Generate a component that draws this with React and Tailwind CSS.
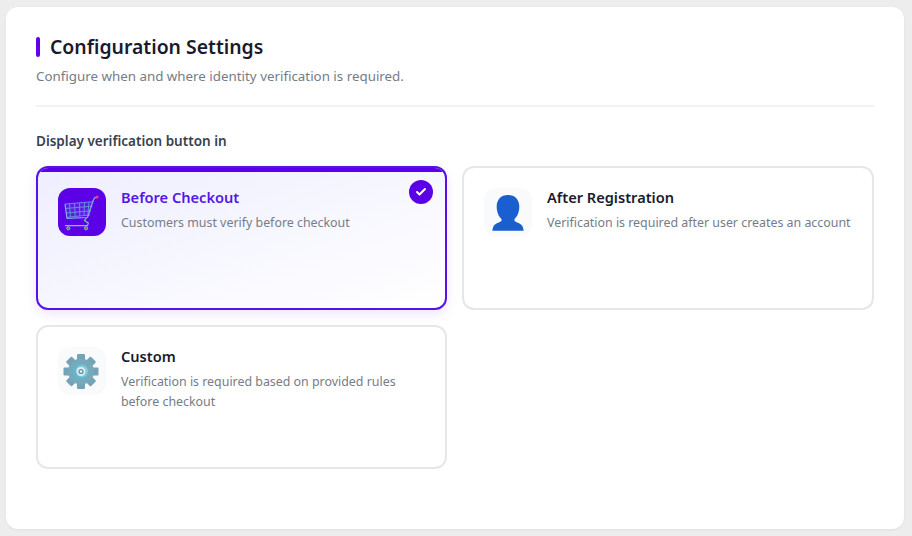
import React from 'react';
import { Check } from 'lucide-react';

const OPTIONS = [
  { key: 'checkout', title: 'Before Checkout', text: 'Customers must verify before checkout', icon: 'cart', selected: true },
  { key: 'registration', title: 'After Registration', text: 'Verification is required after user creates an account', icon: 'user' },
  { key: 'custom', title: 'Custom', text: 'Verification is required based on provided rules before checkout', icon: 'gear' },
];

function CartIcon() {
  return (
    <svg viewBox="0 0 48 48" fill="none" className="h-12 w-12">
      <path d="M7 16 35.300 13.700 32 27 9 29.500Z" fill="#5a6fe0" fillOpacity="0.25" />
      <path d="M7 16 35.300 13.700M7.400 20.500 34.300 18.200M8 25 33 22.800M8.700 29.300 32 27M11.500 15.600l1 13.500M16.500 15.200l.7 13.500M21.500 14.800l.3 13.400M26.500 14.400l-.5 13.400M31 14 29.800 27.300" stroke="#6c93e0" strokeWidth="0.900" />
      <path d="M7 16 9 30.300 29.500 29.500 35 13 36.500 9.800 38.700 9.300" stroke="#79b4dc" strokeWidth="1.200" />
      <path d="M28.500 29.800 26.500 32.500 30.300 35 29.500 37.700H7" stroke="#74c9b4" strokeWidth="1.200" />
      <circle cx="39" cy="9" r="1.600" fill="#e2447c" />
      <circle cx="10.300" cy="40.300" r="1.600" fill="#3d8f5d" stroke="#a8d8b0" strokeWidth="0.700" />
      <circle cx="28" cy="40.300" r="1.600" fill="#3d8f5d" stroke="#a8d8b0" strokeWidth="0.700" />
    </svg>
  );
}

function UserIcon() {
  return (
    <svg viewBox="0 0 48 48" className="h-12 w-12">
      <path d="M24 7c-7.200 0-11.300 4.800-11.300 11.500 0 5.500 2 10 4.800 12.500v2c-2.500 1.800-7 2.300-8.300 6-.4 1.200-.9 3.700-.9 3.700h31.400s-.5-2.500-.9-3.700c-1.300-3.700-5.800-4.200-8.300-6v-2c2.800-2.500 4.800-7 4.800-12.500C35.300 11.800 31.200 7 24 7Z" fill="#1a5fd0" />
    </svg>
  );
}

function GearIcon() {
  const teeth = [0, 45, 90, 135, 180, 225, 270, 315];
  return (
    <svg viewBox="0 0 48 48" className="h-12 w-12">
      {teeth.map((deg) => (
        <rect key={deg} x="19" y="7" width="8" height="8" rx="1" fill="#72a3b6" transform={`rotate(${deg} 23 24.500)`} />
      ))}
      <circle cx="23" cy="24.500" r="13" fill="#78a9bb" />
      <circle cx="23" cy="24.500" r="8" fill="#5fb9cb" />
      <circle cx="24" cy="24" r="6" fill="#8cc7d4" />
      <circle cx="23" cy="24.500" r="4.500" fill="#dcecf0" />
      <circle cx="23" cy="24.500" r="2.600" fill="#5b93a6" />
      <circle cx="23" cy="24.500" r="1.300" fill="#eef7f8" />
    </svg>
  );
}

function OptionIcon({ name }) {
  if (name === 'cart') return <CartIcon />;
  if (name === 'user') return <UserIcon />;
  return <GearIcon />;
}

function OptionCard({ option }) {
  const { title, text, icon, selected } = option;

  return (
    <div
      className={`relative flex h-[144px] items-start gap-[15px] overflow-hidden rounded-xl border-2 py-5 pl-5 pr-4 ${
        selected
          ? 'border-[#5512ea] bg-gradient-to-br from-[#eeeeff] to-white shadow-[0_4px_12px_rgba(98,0,238,0.1)]'
          : 'border-[#e5e7eb] bg-white'
      }`}
    >
      {selected && <div className="absolute inset-x-0 top-0 h-1 bg-[#5b00e6]" />}
      {selected && (
        <div className="absolute right-3 top-3 flex h-6 w-6 items-center justify-center rounded-full bg-[#5b00e6] text-white">
          <Check size={12} strokeWidth={4} />
        </div>
      )}
      <div
        className={`flex h-12 w-12 shrink-0 items-center justify-center rounded-xl ${
          selected ? 'bg-[#5c00e8]' : 'bg-[#f9fafb]'
        }`}
      >
        <OptionIcon name={icon} />
      </div>
      <div className="min-w-0">
        <div className={`-mt-px text-[14.6px] font-semibold leading-5 ${selected ? 'text-[#5316e6]' : 'text-[#1a1a2e]'}`}>{title}</div>
        <p className="mt-[6px] text-[12.4px] leading-5 text-[#767c88]">{text}</p>
      </div>
    </div>
  );
}

export default function App() {
  return (
    <div className="min-h-[536px] bg-[#ededed] pb-[7px] pl-[6px] pr-[8px] pt-[7px] font-['Noto_Sans',sans-serif]">
      <div className="h-[522px] rounded-xl bg-white px-[30px] pt-[30px] shadow-[0_1px_3px_rgba(0,0,0,0.06)]">
        <div className="flex items-center gap-[10px]">
          <span className="h-5 w-1 rounded-sm bg-[#6200ee]" />
          <h1 className="text-[19.4px] font-semibold leading-5 text-[#1a1a2e]">Configuration Settings</h1>
        </div>
        <p className="mt-[9px] text-[13.35px] leading-5 text-[#767c88]">Configure when and where identity verification is required.</p>
        <div className="mt-[19px] h-0.5 bg-[#f1f2f4]" />
        <div className="mt-[24px] text-[13.5px] font-semibold leading-5 text-[#374151]">Display verification button in</div>
        <div className="mt-[15px] grid grid-cols-[411px_412px] gap-x-[15px] gap-y-[15px]">
          {OPTIONS.map((option) => (
            <OptionCard key={option.key} option={option} />
          ))}
        </div>
      </div>
    </div>
  );
}
